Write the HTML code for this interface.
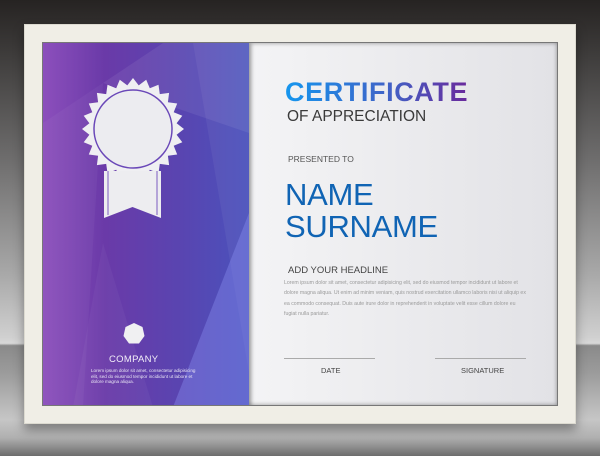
<!DOCTYPE html>
<html><head><meta charset="utf-8"><style>
*{margin:0;padding:0;box-sizing:border-box}
body{width:600px;height:456px;overflow:hidden;position:relative;font-family:"Liberation Sans",sans-serif;
background:linear-gradient(180deg,#262322 0%,#3a3837 10%,#6e6d6d 35%,#a8a8a8 60%,#d0d0d0 74%,#d8d8d8 75.3%,#8a8a8a 75.8%,#9c9c9c 82%,#c6c6c6 92%,#b0b0b0 96%,#6c6c6c 100%)}
.frame{position:absolute;left:24px;top:24px;width:552px;height:400px;background:#f0eee6;box-shadow:0 6px 10px rgba(0,0,0,.35);border:1px solid #dcdad0}
.inner{position:absolute;left:42px;top:42px;width:516px;height:364px;background:linear-gradient(90deg,#fff 0%,#f1f1f3 50%,#e2e2e6 100%);border:1px solid #777;box-shadow:inset 0 0 4px rgba(0,0,0,.4);overflow:hidden}
.panel{position:absolute;left:0;top:0;width:206px;height:364px;background:linear-gradient(90deg,#8c4fbc 0%,#6a3aa8 30%,#5a44b0 65%,#4a52bc 100%);box-shadow:2px 0 4px rgba(0,0,0,.4)}
.t{position:absolute;white-space:nowrap}
</style></head><body>
<div class="frame"></div>
<div class="inner">
 <div class="panel">
  <svg width="206" height="364" style="position:absolute;left:0;top:0">
   <polygon points="120,0 206,0 206,90 60,40" fill="#fff" opacity=".07"/>
   <polygon points="150,0 206,0 206,330" fill="#fff" opacity=".05"/>
   <polygon points="0,80 60,40 40,364 0,364" fill="#fff" opacity=".04"/>
   <polygon points="206,170 206,364 130,364" fill="#8a8ef0" opacity=".4"/>
   <polygon points="30,364 60,200 110,364" fill="#fff" opacity=".04"/>
   <polygon id="star" fill="#efeff2"/>
   <circle cx="90" cy="86" r="39" fill="#ececf0" stroke="#6a48b8" stroke-width="1.5"/>
   <path d="M61,128 H118 V175 L89.5,164 L61,175 Z" fill="#ededf0"/>
   <path d="M65,128 V172 M114,128 V172" stroke="#7a5cc0" stroke-width="1"/>
   <polygon points="91,280 99.5,284 101.5,293 96,300.5 86,300.5 80.5,293 82.5,284" fill="#f0f0f2"/>
  </svg>
  <div class="t" style="left:66px;top:311px;font-size:9.5px;color:#f2eef8;letter-spacing:.3px">COMPANY</div>
  <div class="t" style="left:48px;top:325px;font-size:4.6px;line-height:5.6px;color:#e8e4f4">Lorem ipsum dolor sit amet, consectetur adipisicing<br>elit, sed do eiusmod tempor incididunt ut labore et<br>dolore magna aliqua.</div>
 </div>
 <div class="t" style="left:242px;top:34px;font-size:27px;font-weight:bold;letter-spacing:.6px;background:linear-gradient(90deg,#1596ee,#3f64c8 55%,#6a2a9c);-webkit-background-clip:text;background-clip:text;color:transparent">CERTIFICATE</div>
 <div class="t" style="left:244px;top:65px;font-size:15.5px;color:#3a3a3a">OF APPRECIATION</div>
 <div class="t" style="left:245px;top:111px;font-size:8.5px;color:#555">PRESENTED TO</div>
 <div class="t" style="left:242px;top:136px;font-size:31px;line-height:32px;color:#1064b4;letter-spacing:-.3px">NAME<br>SURNAME</div>
 <div class="t" style="left:245px;top:222px;font-size:9.5px;color:#444">ADD YOUR HEADLINE</div>
 <div class="t" style="left:241px;top:235px;font-size:5.2px;line-height:10.4px;color:#9a9a9a">Lorem ipsum dolor sit amet, consectetur adipisicing elit, sed do eiusmod tempor incididunt ut labore et<br>dolore magna aliqua. Ut enim ad minim veniam, quis nostrud exercitation ullamco laboris nisi ut aliquip ex<br>ea commodo consequat. Duis aute irure dolor in reprehenderit in voluptate velit esse cillum dolore eu<br>fugiat nulla pariatur.</div>
 <div style="position:absolute;left:241px;top:315px;width:91px;height:1px;background:#aaa"></div>
 <div style="position:absolute;left:392px;top:315px;width:91px;height:1px;background:#aaa"></div>
 <div class="t" style="left:278px;top:323px;font-size:7.5px;color:#444">DATE</div>
 <div class="t" style="left:418px;top:323px;font-size:7.5px;color:#444">SIGNATURE</div>
</div>
<script>
var p=[],n=24;for(var i=0;i<n*2;i++){var r=i%2?44:51,a=Math.PI*i/n-Math.PI/2;p.push((90+r*Math.cos(a)).toFixed(1)+","+(86+r*Math.sin(a)).toFixed(1));}
document.getElementById("star").setAttribute("points",p.join(" "));
</script>
</body></html>
